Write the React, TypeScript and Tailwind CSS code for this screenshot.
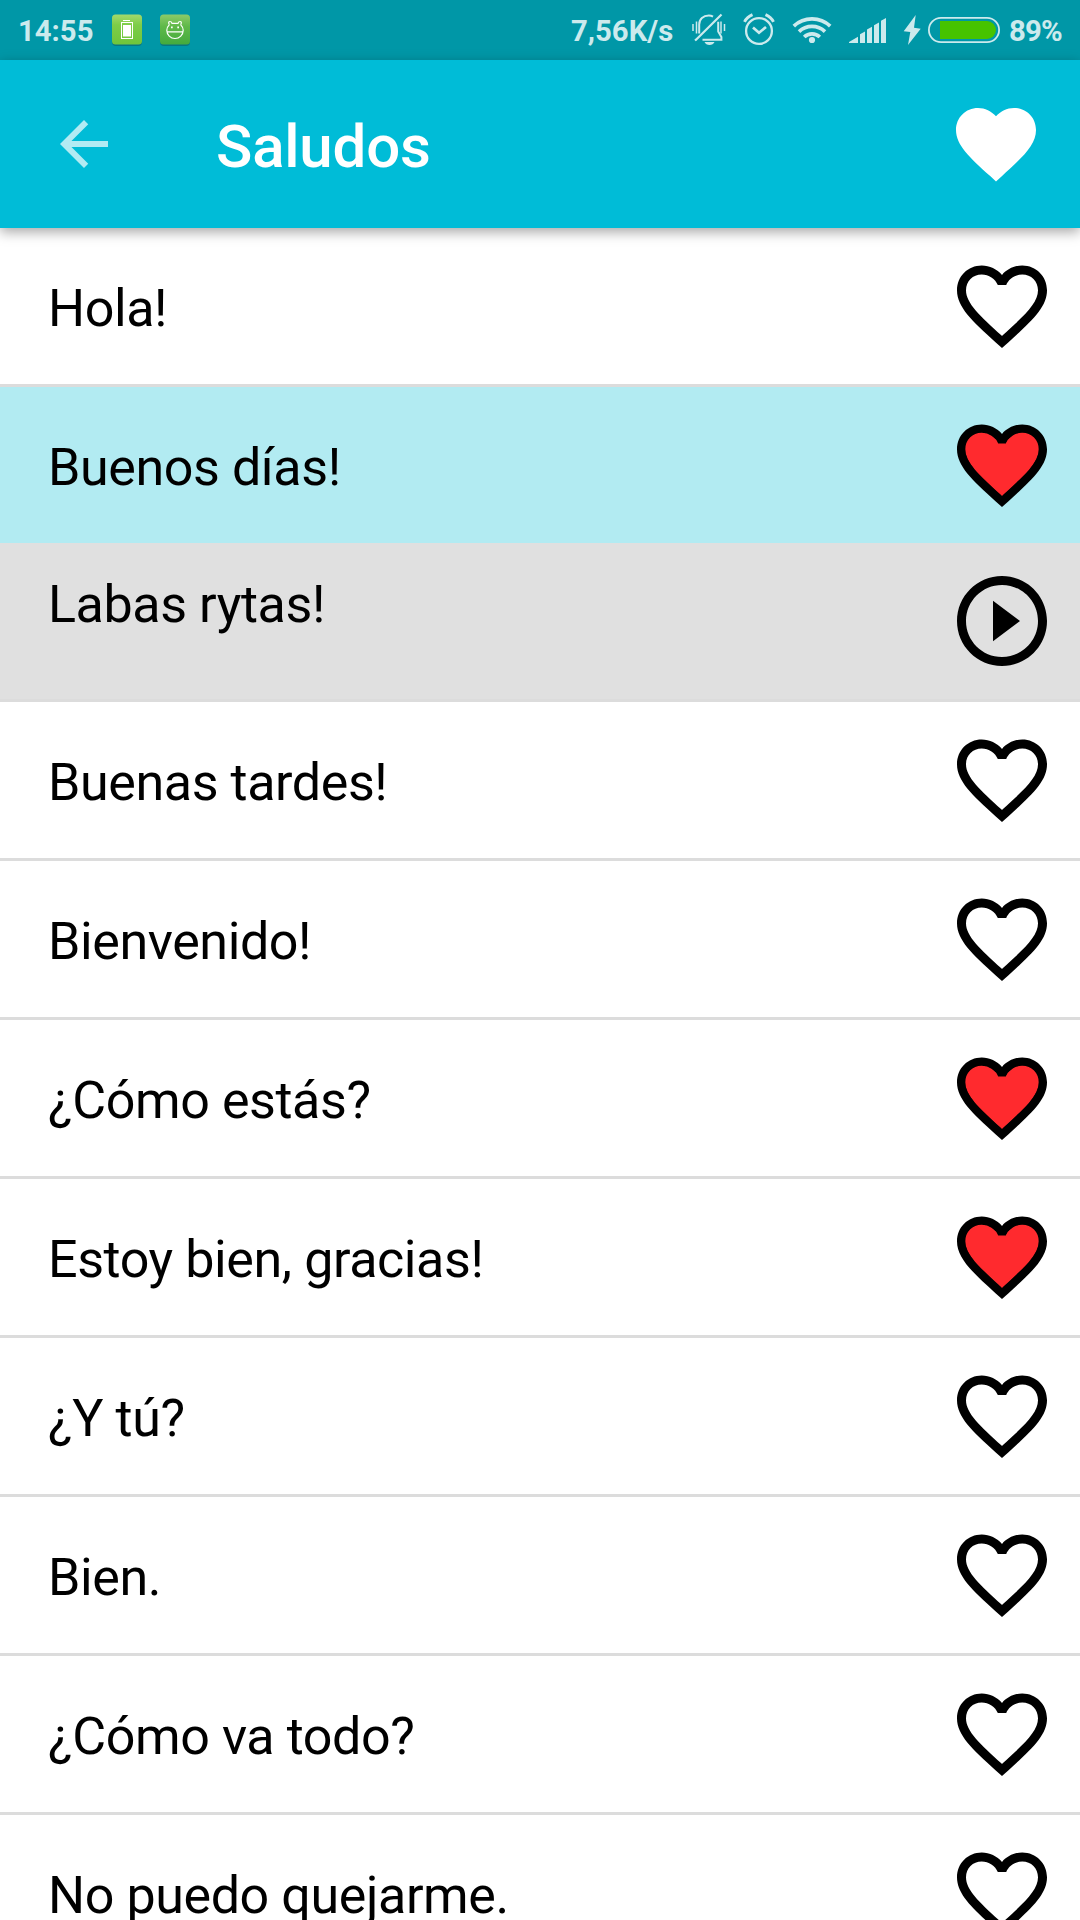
const OUTLINE =
  "M16.5 3c-1.74 0-3.41.81-4.5 2.09C10.91 3.81 9.24 3 7.5 3 4.42 3 2 5.42 2 8.5c0 3.78 3.4 6.86 8.55 11.54L12 21.35l1.45-1.32C18.6 15.36 22 12.28 22 8.5 22 5.42 19.58 3 16.5 3zm-4.4 15.55l-.1.1-.1-.1C7.14 14.24 4 11.39 4 8.5 4 6.5 5.5 5 7.5 5c1.54 0 3.04.99 3.57 2.36h1.87C13.46 5.99 14.96 5 16.5 5c2 0 3.5 1.5 3.5 3.5 0 2.89-3.14 5.74-7.9 10.05z";
const SOLID =
  "M12 21.35l-1.45-1.32C5.4 15.36 2 12.28 2 8.5 2 5.42 4.42 3 7.5 3c1.74 0 3.41.81 4.5 2.09C13.09 3.81 14.76 3 16.5 3 19.58 3 22 5.42 22 8.5c0 3.78-3.4 6.86-8.55 11.54L12 21.35z";
const INNER =
  "M12.1 18.55l-.1.1-.1-.1C7.14 14.24 4 11.39 4 8.5 4 6.5 5.5 5 7.5 5c1.54 0 3.04.99 3.57 2.36h1.87C13.46 5.99 14.96 5 16.5 5c2 0 3.5 1.5 3.5 3.5 0 2.89-3.14 5.74-7.9 10.05z";

function Heart({ liked }: { liked: boolean }) {
  return (
    <svg viewBox="0 0 24 24" className="size-[108px] shrink-0">
      <path d={OUTLINE} fill="#000" />
      {liked && <path d={INNER} fill="#ff2a2e" stroke="#ff2a2e" strokeWidth="0.3" />}
    </svg>
  );
}

function PlayIcon() {
  return (
    <svg viewBox="0 0 24 24" className="size-[108px] shrink-0">
      <path d="M10 16.5l6-4.5-6-4.5v9zM12 2C6.48 2 2 6.48 2 12s4.48 10 10 10 10-4.48 10-10S17.52 2 12 2zm0 18c-4.41 0-8-3.59-8-8s3.59-8 8-8 8 3.59 8 8-3.59 8-8 8z" />
    </svg>
  );
}

function StatusBar() {
  return (
    <div className="flex h-[60px] items-center bg-[#0097a7] text-[29.3px] leading-[60px] font-bold text-[#cceaed]">
      <span className="ml-[18px] w-[94px] pt-px">14:55</span>
      <svg viewBox="112 14 31 34" className="h-[34px] w-[31px]">
        <defs>
          <linearGradient id="battery-bg" x1="0" y1="0" x2="0" y2="1">
            <stop offset="0" stopColor="#a3d96c" />
            <stop offset="0.35" stopColor="#7dcd48" />
            <stop offset="1" stopColor="#6fc53b" />
          </linearGradient>
        </defs>
        <rect x="112" y="17" width="30" height="30" rx="4" fill="#087683" />
        <rect x="112" y="15.500" width="30" height="30" rx="3.5" fill="url(#battery-bg)" />
        <path d="M123 21.5h7" stroke="#fff" strokeWidth="1" />
        <rect x="121.5" y="23.5" width="11" height="16" fill="none" stroke="#fff" />
        <rect x="123" y="26" width="8" height="11.5" fill="#fff" />
      </svg>
      <svg viewBox="160 14 31 34" className="ml-[17px] h-[34px] w-[31px]">
        <defs>
          <linearGradient id="robot-bg" x1="0" y1="0" x2="0" y2="1">
            <stop offset="0" stopColor="#8cca69" />
            <stop offset="0.4" stopColor="#5fb949" />
            <stop offset="1" stopColor="#44aa3e" />
          </linearGradient>
        </defs>
        <rect x="160" y="17" width="30" height="30" rx="4" fill="#087683" />
        <rect x="160" y="15.5" width="30" height="30" rx="3.5" fill="url(#robot-bg)" />
        <g fill="none" stroke="#fff" strokeWidth="1.2">
          <path d="M169.4 25.6c-1.3-1.7-.8-3.1.5-3.1 1 0 1.8.8 2.1 1.8h6c.3-1 1.100-1.800 2.100-1.800 1.300 0 1.800 1.400.5 3.100" />
          <path d="M169.400 25.600c-1.700 1.700-2.600 3.600-2.600 5.700 0 4.500 3.700 8.200 8.200 8.200s8.200-3.700 8.200-8.200c0-2.100-.9-4-2.600-5.700M167 32.800h16" />
        </g>
        <path d="M171 27.500h1.700v1.700H171zM177.300 27.500h1.700v1.700h-1.700z" fill="#fff" />
      </svg>

      <span className="ml-auto w-[120px] pt-px">7,56K/s</span>
      <svg viewBox="691 12 36 36" className="size-9" fill="none" stroke="#cceaed" strokeWidth="2">
        <path d="M693 24v7M696.5 21.5v12M724.5 24v7M721 21.5v12" strokeWidth="1.5" />
        <path d="M699.2 33.5V24.5c0-5.2 4-9 9.6-9 1.7 0 3 .4 4.2 1.1M718.2 21.8v9.7l3.2 5.5v2.7H702.5" />
        <path d="M695 40.5l2.2-1.8M695.500 40.200l26-25.700" strokeWidth="2.2" />
        <path d="M704.5 42h10c-.8 2-2.7 3-5 3s-4.2-1-5-3z" fill="#cceaed" stroke="none" />
      </svg>
      <svg viewBox="743 12 32 36" className="ml-4 h-9 w-8" fill="none" stroke="#cceaed">
        <circle cx="759" cy="31" r="12.9" strokeWidth="2.3" />
        <path d="M744.5 21.8c1.7-3.3 4.5-5.7 8-7.2M773.5 21.8c-1.7-3.3-4.5-5.7-8-7.2" strokeWidth="2.9" />
        <path d="M753 27.5l6 5.2 7-5.7" strokeWidth="2.7" />
      </svg>
      <svg viewBox="791 12 42 36" className="ml-4 h-9 w-[42px]" fill="none" stroke="#cceaed" strokeWidth="3.7">
        <path d="M793.8 26.2a26.5 26.5 0 0 1 36.4 0M799 31.6a19 19 0 0 1 26 0M804.2 37a11.3 11.3 0 0 1 15.6 0" />
        <circle cx="812" cy="40" r="3.1" fill="#cceaed" stroke="none" />
      </svg>
      <svg viewBox="849 12 38 36" className="ml-4 h-9 w-[38px]" fill="#cceaed">
        <path d="M849 43v-1l9-5.3V43zM860 43V34.2l5-2.7V43zM867 43V29.6l5-2.8V43zM874 43V25.3l5-2.9V43zM881 43V20.8l5-2.9V43z" />
      </svg>
      <svg viewBox="903 12 19 36" className="ml-4 h-9 w-[19px]" fill="#cceaed">
        <path d="M915.7 15l-12 16.2 6.6.9L908 45l12.7-16.3-6.7-1z" />
      </svg>
      <svg viewBox="928 12 72 36" className="ml-1.5 h-9 w-[72px]">
        <rect x="928.9" y="17.9" width="70.2" height="24.2" rx="12.1" fill="none" stroke="#cceaed" strokeWidth="1.8" />
        <path d="M940 21h47a9 9 0 0 1 0 18h-47z" fill="#46c300" />
      </svg>
      <span className="mr-[18px] ml-[9px] w-[53px] pt-px tracking-[-0.8px]">89%</span>
    </div>
  );
}

function AppBar() {
  return (
    <header className="relative z-10 flex h-[168px] items-center bg-[#00bcd7] pr-9 pl-12 text-white shadow-[0_4px_12px_rgba(0,0,0,0.35)]">
      <svg viewBox="0 0 24 24" className="size-[72px]" fill="#b2ebf3">
        <path d="M20 11H7.83l5.59-5.59L12 4l-8 8 8 8 1.41-1.41L7.83 13H20v-2z" />
      </svg>
      <h1 className="ml-24 flex-1 pt-1.5 text-[60px] leading-[70px] font-medium tracking-[-0.2px]">Saludos</h1>
      <svg viewBox="0 0 24 24" className="size-24" fill="#fff">
        <path d={SOLID} />
      </svg>
    </header>
  );
}

type Phrase = { text: string; liked?: boolean; translation?: string };

const PHRASES: Phrase[] = [
  { text: "Hola!" },
  { text: "Buenos días!", liked: true, translation: "Labas rytas!" },
  { text: "Buenas tardes!" },
  { text: "Bienvenido!" },
  { text: "¿Cómo estás?", liked: true },
  { text: "Estoy bien, gracias!", liked: true },
  { text: "¿Y tú?" },
  { text: "Bien." },
  { text: "¿Cómo va todo?" },
  { text: "No puedo quejarme." },
];

function PhraseItem({ text, liked = false, translation }: Phrase) {
  return (
    <li className="shrink-0 border-b-[3px] border-[#dcdcdc]">
      <div className={`flex h-[156px] items-center justify-between pr-6 pl-12 ${translation ? "bg-[#b2ebf2]" : "bg-white"}`}>
        <span className="pt-[5px]">{text}</span>
        <Heart liked={liked} />
      </div>
      {translation && (
        <div className="flex h-[156px] items-center justify-between bg-[#e0e0e0] pr-6 pl-12">
          <span className="pb-[33px]">{translation}</span>
          <PlayIcon />
        </div>
      )}
    </li>
  );
}

export default function App() {
  return (
    <div className="flex h-[1920px] w-[1080px] flex-col overflow-hidden bg-white font-['Roboto',sans-serif]">
      <StatusBar />
      <AppBar />
      <ul className="flex min-h-0 flex-1 flex-col overflow-hidden text-[52px] leading-[60px] tracking-[-0.4px] text-black">
        {PHRASES.map((p) => (
          <PhraseItem key={p.text} {...p} />
        ))}
      </ul>
    </div>
  );
}
